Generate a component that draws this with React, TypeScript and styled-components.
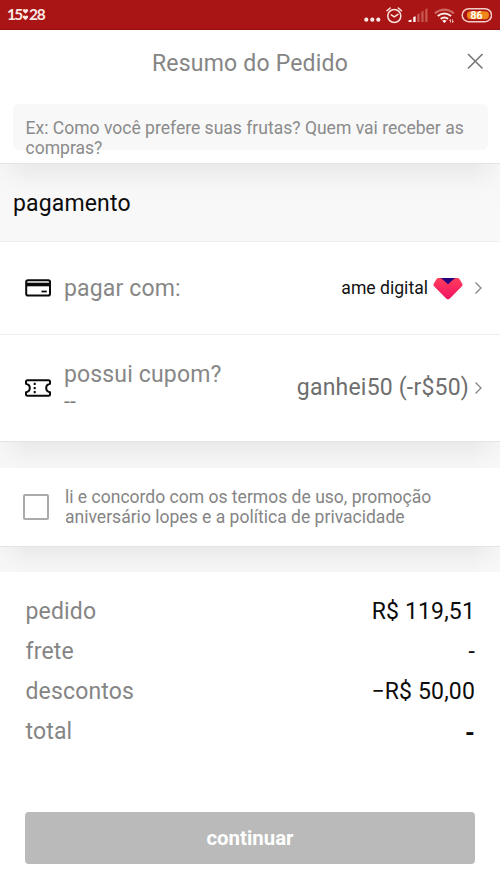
import React from "react";
import styled, { createGlobalStyle } from "styled-components";

const GlobalStyle = createGlobalStyle`
  * { box-sizing: border-box; }
  body { margin: 0; background: #fff; font-family: Roboto, "Liberation Sans", sans-serif; }
`;

const Screen = styled.main`
  width: 500px;
  height: 889px;
  overflow: hidden;
  display: flex;
  flex-direction: column;
  background: #fff;
`;

const StatusBar = styled.header`
  height: 30px;
  flex: none;
  display: flex;
  justify-content: space-between;
  background: #a91414;
  border-bottom: 1px solid #981010;
  padding: 0 8px 0 7px;
`;

const Clock = styled.div`
  display: flex;
  align-items: center;
  height: 28px;
  color: #fbe9e5;
  font: 700 15.5px/28px Lato, sans-serif;
  letter-spacing: -1.2px;

  svg { margin-left: 1px; }
`;

const ClockDigits = styled.span`
  width: 14px;
  letter-spacing: -1.8px;
`;

const StatusIcons = styled.div`
  display: flex;
  height: 30px;
`;

const TitleBar = styled.div`
  height: 74px;
  flex: none;
  display: grid;
  grid-template-columns: 50px 1fr 50px;
  align-items: start;
`;

const Title = styled.h1`
  grid-column: 2;
  margin: 20px 0 0;
  text-align: center;
  color: #858585;
  font-size: 23px;
  line-height: 28px;
  font-weight: 400;
  letter-spacing: 0.2px;
`;

const CloseButton = styled.button`
  border: 0;
  padding: 0;
  margin: 22px 0 0 16px;
  width: 18px;
  height: 18px;
  background: none;
  svg { display: block; }
`;

const NoteArea = styled.div`
  height: 59px;
  flex: none;
  padding: 0 12px 0 13px;
`;

const NoteField = styled.div`
  height: 46px;
  border-radius: 6px;
  background: #f8f8f8;
  padding: 14px 10px 0 12.5px;
  color: #8b8b8b;
  font-size: 17.55px;
  line-height: 20px;
`;

const Gap = styled.div<{ $height: number }>`
  height: ${(p) => p.$height}px;
  flex: none;
  border-top: 1px solid #e4e4e4;
  background:
    linear-gradient(to right, rgba(248, 248, 248, 0.75), transparent 28px, transparent 472px, rgba(248, 248, 248, 0.75)),
    linear-gradient(#eaeaea, #f3f3f3 17px, #f7f7f7 28px, #f8f8f8 38px);
`;

const SectionTitle = styled.h2`
  margin: 0;
  padding: 26px 13px 0;
  color: #0c0c0c;
  font-size: 23px;
  line-height: 28px;
  font-weight: 400;
  letter-spacing: 0.15px;
`;

const OptionRow = styled.section<{ $height: number }>`
  height: ${(p) => p.$height}px;
  flex: none;
  display: flex;
  align-items: center;
  padding: 0 17px 0 25px;
  border-top: 1px solid #eee;
`;

const OptionIcon = styled.svg`
  flex: none;
  width: 26px;
  height: 18px;
  margin-right: 13px;
`;

const OptionText = styled.div`
  flex: 1;
  padding-top: 1px;
  color: #878787;
  font-size: 23px;
  line-height: 28px;
  letter-spacing: 0.15px;
`;

const OptionDetail = styled.div`
  height: 27px;
  font-size: 21px;
  line-height: 25px;
  color: #777;
`;

const OptionValue = styled.div<{ $strong?: boolean }>`
  display: flex;
  align-items: center;
  color: ${(p) => (p.$strong ? "#111" : "#6e6e6e")};
  font-size: ${(p) => (p.$strong ? 17.6 : 23)}px;
  letter-spacing: ${(p) => (p.$strong ? 0 : 0.2)}px;
  line-height: 28px;
`;

const AmeLogo = styled.svg`
  width: 30px;
  height: 23px;
  margin: 0 6px 0 5px;
`;

const Chevron = styled.svg`
  width: 9px;
  height: 14px;
  margin-left: 5px;
`;

const Terms = styled.label`
  height: 78px;
  flex: none;
  display: flex;
  align-items: center;
  padding: 0 23px;
`;

const Checkbox = styled.span`
  flex: none;
  width: 26px;
  height: 26px;
  margin-right: 16px;
  border: 2px solid #aaa;
  border-radius: 2px;
`;

const TermsText = styled.span`
  color: #858585;
  font-size: 17.55px;
  line-height: 20px;
`;

const Summary = styled.dl`
  margin: 0;
  height: 240px;
  flex: none;
  padding: 19px 25px 0 25.5px;
`;

const SummaryRow = styled.div`
  height: 40px;
  display: flex;
  justify-content: space-between;
  align-items: center;
  font-size: 23px;
  letter-spacing: 0.15px;
`;

const SummaryLabel = styled.dt`
  color: #858585;
`;

const SummaryValue = styled.dd<{ $bold?: boolean }>`
  margin: 0;
  padding-top: ${(p) => (p.$bold ? 4 : 0)}px;
  color: #0c0c0c;
  font-weight: ${(p) => (p.$bold ? 700 : 400)};
  font-size: ${(p) => (p.$bold ? 25 : 23)}px;
`;

const ContinueButton = styled.button`
  height: 52px;
  flex: none;
  margin: 0 25px;
  padding: 0 0 1px;
  border: 0;
  border-radius: 4px;
  background: #bababa;
  color: #fff;
  font: 700 20.4px/50px Roboto, sans-serif;
`;

const ChevronIcon = () => (
  <Chevron viewBox="0 0 9 14" fill="none" stroke="#858585" strokeWidth="1.3">
    <path d="M1.5 1.5l5.5 5.5-5.5 5.5" />
  </Chevron>
);

const HeartColon = () => (
  <svg width="7" height="13" viewBox="0 0 9 14" preserveAspectRatio="none" fill="#fbe9e5">
    <path d="M4.5 6.2L1.3 3.4C0 1.5 3.2 0 4.5 1.9 5.8 0 9 1.5 7.7 3.4z" />
    <path d="M4.5 13.3L1.3 10.5C0 8.600 3.200 7.100 4.500 9 5.800 7.100 9 8.600 7.700 10.500z" />
  </svg>
);

const StatusGlyphs = () => (
  <svg width="130" height="30" viewBox="362.5 0 130 30" fill="none">
    <g fill="#fbe9e5">
      <circle cx="366.8" cy="19.7" r="2.1" />
      <circle cx="372.8" cy="19.7" r="2.1" />
      <circle cx="378.8" cy="19.7" r="2.1" />
    </g>
    <g stroke="#fbe4e0" strokeWidth="1.5" strokeLinecap="round">
      <circle cx="394.8" cy="16" r="6.5" />
      <path d="M391.8 14.8l3 2 3.7-2.5M387.5 10.8l3.2-2.8M402 10.8l-3.2-2.8" />
    </g>
    <path d="M409 22v-1.5l3-.9V22zM413.8 22v-4.9l2.3-.9V22z" fill="#fff" />
    <path d="M417.8 22v-7.7l2.3-1V22zM421.8 22V11.7l2.3-1V22zM425.7 22V9.3l2.3-1V22z" fill="#c75851" />
    <g strokeWidth="2.1">
      <path d="M435.3 13.3q9.6-7.3 19.2 0" stroke="#ce6760" />
      <path d="M438.2 16q6.7-5 13.4 0M441.2 18.9q3.7-2.7 7.4 0" stroke="#fbe9e5" />
    </g>
    <path d="M442.7 20.8q2.2-1.5 4.4 0l-2.2 2.2z" fill="#fff" />
    <path d="M451 19.5v3M449.800 20.800l1.200-1.400M453 19.500v3m1.100-1.300L453 22.600" stroke="#edb8b4" />
    <rect x="462.7" y="8.7" width="29.3" height="13" rx="6.5" stroke="#f5cfc7" strokeWidth="1.5" />
    <path d="M471 11.2h14.5q4 0 4 4t-4 4H471q-3.5 0-3.5-4t3.5-4z" fill="#ef8719" />
    <text x="477" y="18.9" textAnchor="middle" fill="#fff" fontFamily="Roboto, sans-serif" fontSize="10.5" fontWeight="700">86</text>
  </svg>
);

const summary = [
  { label: "pedido", value: "R$ 119,51" },
  { label: "frete", value: "-" },
  { label: "descontos", value: "−R$ 50,00" },
  { label: "total", value: "-", bold: true },
];

export default function App() {
  return (
    <>
      <GlobalStyle />
      <Screen>
        <StatusBar>
          <Clock><ClockDigits>15</ClockDigits><HeartColon />28</Clock>
          <StatusIcons><StatusGlyphs /></StatusIcons>
        </StatusBar>
        <TitleBar>
          <Title>Resumo do Pedido</Title>
          <CloseButton aria-label="fechar">
            <svg width="18" height="18" viewBox="0 0 18 18" stroke="#777" strokeWidth="1.6">
              <path d="M2 2l14.5 14.5M16.5 2L2 16.5" />
            </svg>
          </CloseButton>
        </TitleBar>
        <NoteArea>
          <NoteField>Ex: Como você prefere suas frutas? Quem vai receber as compras?</NoteField>
        </NoteArea>
        <Gap $height={78}>
          <SectionTitle>pagamento</SectionTitle>
        </Gap>
        <OptionRow $height={93}>
          <OptionIcon viewBox="0 0 26 18" fill="none" stroke="#0a0a0a" strokeWidth="2">
            <rect x="1.2" y="1.2" width="23.8" height="15.4" rx="1.8" />
            <path d="M1 5.5h24" strokeWidth="3.6" />
            <path d="M16.5 12.5h5.3" strokeWidth="1.8" />
          </OptionIcon>
          <OptionText>pagar com:</OptionText>
          <OptionValue $strong>
            ame digital
            <AmeLogo viewBox="0 0 30 23">
              <defs>
                <linearGradient id="ame" x1="0" y1="0" x2="0" y2="1">
                  <stop stopColor="#ff3d5b" />
                  <stop offset="1" stopColor="#ee1164" />
                </linearGradient>
              </defs>
              <path d="M7 1h16l-4 7h-8z" fill="#26037c" />
              <path d="M5.2 1h2q.8 0 1.300.6L15 7.300l6.500-5.700q.5-.6 1.300-.6h2q1 0 1.600.9l2.600 4.400q1.200 1.800-.3 3.300L16.800 21.400q-1.800 1.900-3.600 0L1.300 9.600Q-.2 8.100 1 6.300l2.600-4.400Q4.200 1 5.200 1z" fill="url(#ame)" />
            </AmeLogo>
            <ChevronIcon />
          </OptionValue>
        </OptionRow>
        <OptionRow $height={107}>
          <OptionIcon viewBox="0 0 26 18" fill="none" stroke="#0a0a0a" strokeWidth="2">
            <path d="M2.5 1.2h21q1.5 0 1.5 1.5v2q-3.8.8-3.8 4.3t3.8 4.3v2q0 1.500-1.500 1.500h-21q-1.500 0-1.500-1.500v-2q3.800-.8 3.800-4.300T1 4.700v-2q0-1.500 1.500-1.500z" strokeLinejoin="round" />
            <path d="M9.7 3.8v11" strokeDasharray="2.3 1.8" />
          </OptionIcon>
          <OptionText>
            possui cupom?
            <OptionDetail>--</OptionDetail>
          </OptionText>
          <OptionValue>
            ganhei50 (-r$50)
            <ChevronIcon />
          </OptionValue>
        </OptionRow>
        <Gap $height={27} />
        <Terms>
          <Checkbox role="checkbox" aria-checked="false" />
          <TermsText>
            li e concordo com os termos de uso, promoção<br />
            aniversário lopes e a política de privacidade
          </TermsText>
        </Terms>
        <Gap $height={26} />
        <Summary>
          {summary.map((row) => (
            <SummaryRow key={row.label}>
              <SummaryLabel>{row.label}</SummaryLabel>
              <SummaryValue $bold={row.bold}>{row.value}</SummaryValue>
            </SummaryRow>
          ))}
        </Summary>
        <ContinueButton>continuar</ContinueButton>
      </Screen>
    </>
  );
}
